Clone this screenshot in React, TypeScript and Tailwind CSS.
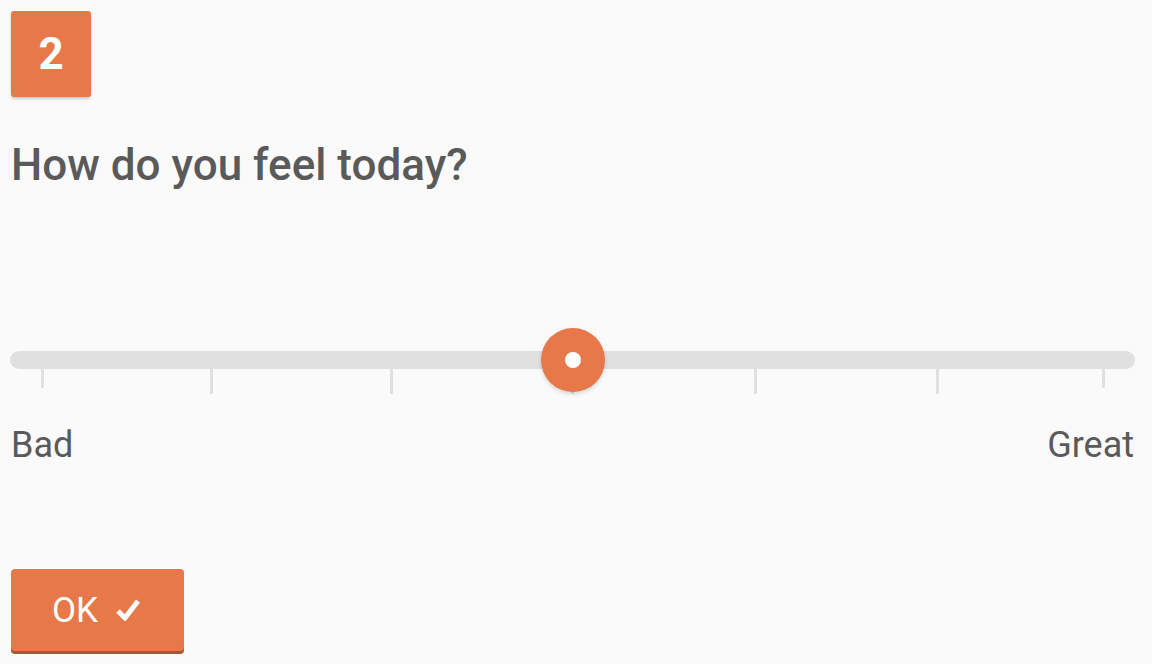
import React from "react";

const ticks = [
  { x: 31, tall: false },
  { x: 200, tall: true },
  { x: 380, tall: true },
  { x: 561, tall: true },
  { x: 744, tall: true },
  { x: 926, tall: true },
  { x: 1092, tall: false },
];

function MoodSlider() {
  return (
    <div className="relative flex h-[64px] w-[1125px] -ml-px items-center">
      <div className="h-[18px] w-full rounded-full bg-[#e0e0e0]" />
      {ticks.map((t) => (
        <div
          key={t.x}
          className={`absolute top-[40px] w-[3px] bg-[#e0e0e0] ${t.tall ? "h-[26px]" : "h-[20px]"}`}
          style={{ left: t.x }}
        />
      ))}
      <div className="absolute left-[531px] top-0 flex h-[64px] w-[64px] items-center justify-center rounded-full bg-[#e67849] shadow-[0_2px_4px_rgba(0,0,0,0.15)]">
        <div className="h-[16px] w-[16px] rounded-full bg-white" />
      </div>
    </div>
  );
}

export default function App() {
  return (
    <div
      className="flex min-h-[664px] w-full flex-col items-start bg-[#fafafa] pl-[11px] pr-[18px] pt-[11px] text-[#5a5a5a]"
      style={{ fontFamily: "Roboto, 'Noto Sans', sans-serif" }}
    >
      <div className="flex h-[86px] w-[80px] items-center justify-center rounded-[3px] bg-[#e67849] text-[44px] font-bold leading-none text-white shadow-[0_2px_3px_rgba(0,0,0,0.18)]">
        2
      </div>

      <h1 className="mt-[43px] text-[44px] font-medium leading-[51px]">How do you feel today?</h1>

      <div className="mt-[137px] w-full">
        <MoodSlider />
      </div>

      <div className="mt-[32px] flex w-full justify-between text-[36px] leading-[42px]">
        <span>Bad</span>
        <span>Great</span>
      </div>

      <button className="mt-[103px] flex h-[82px] w-[173px] items-center rounded-[4px] bg-[#e67849] pl-[41px] text-[35px] text-white shadow-[0_3px_0_#a95733]">
        <span className="leading-none">OK</span>
        <svg
          className="ml-[18px]"
          width="25"
          height="22"
          viewBox="0 0 25 22"
          fill="none"
          stroke="white"
          strokeWidth="5"
          strokeLinejoin="miter"
        >
          <path d="M2 12 L9 19 L22 2" />
        </svg>
      </button>
    </div>
  );
}
